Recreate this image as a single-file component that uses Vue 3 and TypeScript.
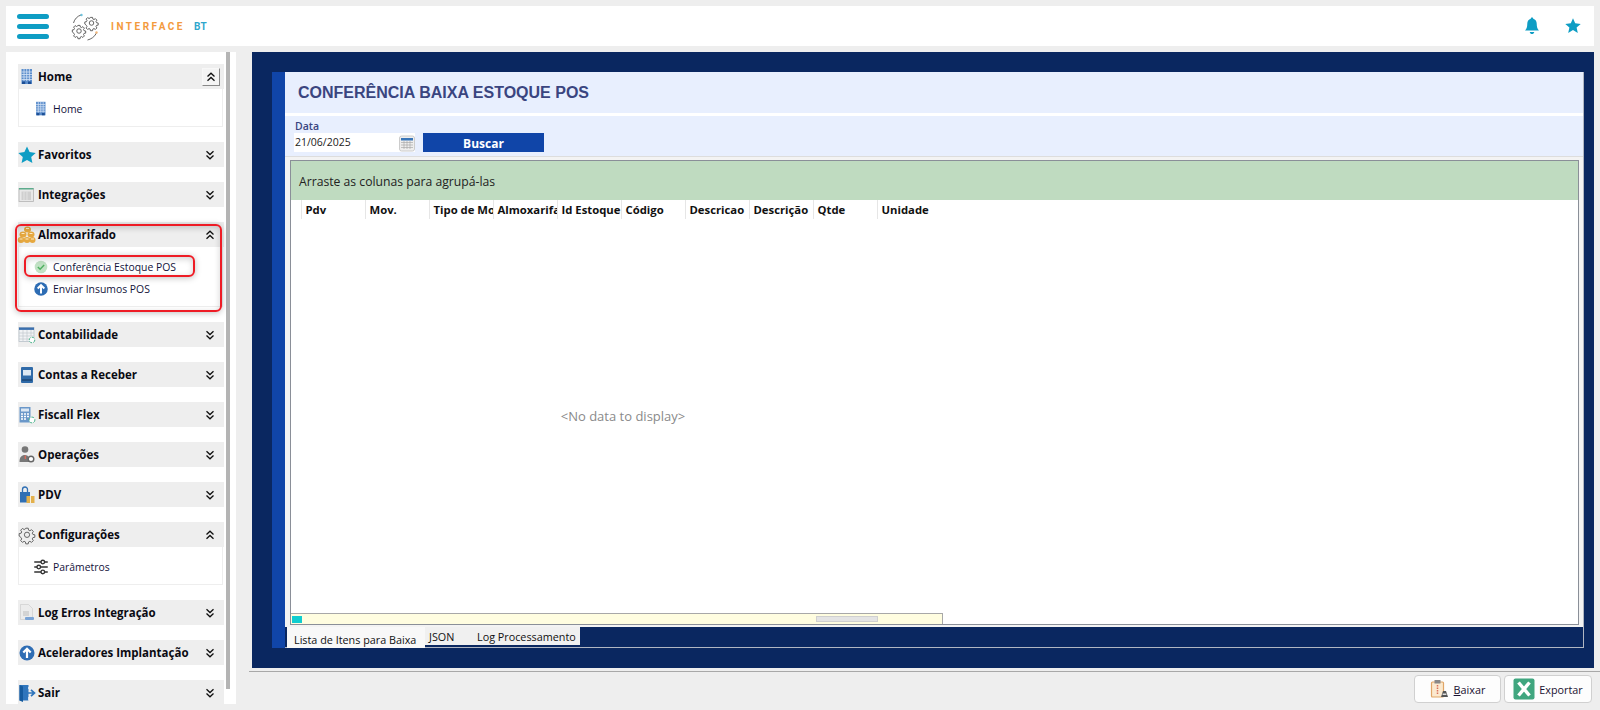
<script setup lang="ts">
interface Item { label: string; icon: string; mark?: boolean }
interface Section { title: string; icon: string; open?: boolean; button?: boolean; mark?: boolean; items?: Item[] }

const building = '<rect x="4.500" y="2" width="10.500" height="15" fill="#5b8dcb"/><path d="M4.500 5h10.500M4.500 7.500h10.500M4.500 10h10.500M4.500 12.500h10.500M7 2v12M9.700 2v12M12.400 2v12" stroke="#d5e3f5" stroke-width=".8"/><rect x="5" y="14.500" width="3.200" height="2.500" fill="#1d4f96"/><rect x="11" y="14.500" width="3.200" height="2.500" fill="#1d4f96"/>'
const gearPath = 'M8.600 2.500h2.800l.4 2.200 1.500.7 1.900-1.200 2 2-1.200 1.900.7 1.500 2.200.4v2.800l-2.200.4-.7 1.500 1.200 1.900-2 2-1.900-1.200-1.500.7-.4 2.200H8.600l-.4-2.200-1.500-.7-1.900 1.200-2-2 1.200-1.900-.7-1.500L1.100 11.400V8.600l2.200-.4.7-1.500-1.200-1.900 2-2 1.900 1.200 1.500-.7z'
const gear = `<g fill="none" stroke="#555" stroke-width="1" transform="translate(1.200 1) scale(.88)"><circle cx="10" cy="10" r="3"/><path d="${gearPath}"/></g>`
const upArrow = '<circle cx="10" cy="10" r="7.500" fill="#2e6db4"/><path d="M10 15V6M6.300 9.500 10 5.800l3.700 3.700" fill="none" stroke="#fff" stroke-width="2.200"/>'

const icons: Record<string, string> = {
  building,
  star: '<path d="M10 1.500l2.600 5.600 6.100.8-4.500 4.200 1.200 6L10 15.100l-5.400 3 1.200-6L1.300 7.900l6.100-.8z" fill="#0e9dc4"/>',
  table: '<rect x="2" y="3.500" width="14.500" height="13" fill="#e8e8e8" stroke="#b4b4b4" stroke-width=".8"/><rect x="2" y="3" width="14.500" height="1.500" fill="#5cab8c"/><rect x="4.500" y="6.500" width="9.500" height="8.500" fill="#cfcfcf"/><path d="M7 6.500v8.500M10 6.500v8.500" stroke="#e2e2e2"/>',
  coins: '<g fill="#e6a83f"><ellipse cx="10.500" cy="4.500" rx="3.500" ry="3"/><ellipse cx="6" cy="9.500" rx="3.500" ry="3"/><ellipse cx="14" cy="9.500" rx="3.500" ry="3"/><ellipse cx="4" cy="15" rx="3.300" ry="3"/><ellipse cx="10" cy="15" rx="3.300" ry="3"/><ellipse cx="15.500" cy="15" rx="3" ry="3"/></g><path d="M9 3.500h3M4.500 8.500h3M12.500 8.500h3M2.500 14h3M8.500 14h3M14 14h3" stroke="#fff2d2" stroke-width=".9"/>',
  calcGreen: '<rect x="2" y="2.500" width="15" height="14" fill="#f1f3f5" stroke="#b0bac4" stroke-width=".7"/><rect x="2" y="2.500" width="15" height="2.400" fill="#3a6fae"/><path d="M2 8h15M2 11h15M2 14h10M6 5v11M10 5v11M14 5v6" stroke="#c2c8ce" stroke-width=".7"/><circle cx="15" cy="15" r="2.800" fill="#fff" stroke="#49b38a" stroke-width="1" stroke-dasharray="3 1.200"/>',
  book: '<rect x="4" y="2" width="12" height="16" rx="1" fill="#2f6aa8"/><rect x="6" y="5" width="8" height="5.500" fill="#dbe7f3"/><rect x="5" y="14" width="10" height="2" fill="#204f82"/>',
  calc: '<rect x="2.500" y="2" width="11" height="15.500" fill="#6a97c9"/><rect x="4" y="3.500" width="8" height="3" fill="#dbe7f3"/><path d="M4 9h2M7 9h2M10 9h2M4 11.500h2M7 11.500h2M10 11.500h2M4 14h2M7 14h2" stroke="#fff" stroke-width="1.300"/><circle cx="15" cy="15" r="2.900" fill="#fff" stroke="#49b38a" stroke-width="1" stroke-dasharray="3 1.200"/>',
  person: '<circle cx="8" cy="4.500" r="3.300" fill="#777"/><path d="M2.500 17c0-5 2-7 5.500-7 2 0 3.500 1 4 3v4z" fill="#777"/><circle cx="14" cy="14" r="2.800" fill="#fff" stroke="#666" stroke-width="1.400"/><rect x="7.600" y="10.500" width="1.400" height="3.500" fill="#d86a5a"/>',
  bag: '<path d="M3 7h10v10.500H3z" fill="#2f6fb4"/><path d="M5.500 7V4.500a2.500 2.500 0 0 1 5 0V7" fill="none" stroke="#2f6fb4" stroke-width="1.300"/><rect x="9.500" y="11" width="8" height="7" fill="#e3b04b"/><path d="M13.500 11v7" stroke="#fff" stroke-width=".8"/>',
  gear,
  doc: '<path d="M3.500 1.500h8l4 4v11h-12z" fill="#ececec" stroke="#cdcdcd" stroke-width=".7"/><path d="M6 8h6v5H6z" fill="#d4d4d4"/><rect x="8" y="14" width="9" height="3" rx="1" fill="#7ba4d6"/>',
  exit: '<path d="M2.500 2h9v15.500h-9z" fill="#2f75bc"/><path d="M6 3.500 2.500 2v15.500L6 19z" fill="#155a9e"/><path d="M8 10h9M14 6.800 17.500 10 14 13.200" fill="none" stroke="#2f75bc" stroke-width="1.700"/><path d="M11.500 4v2M11.500 14v3.500" stroke="#cfe0f4"/>',
  check: '<circle cx="10" cy="10" r="7" fill="#c2e2c5"/><path d="M6.500 10l2.500 2.500 4.500-4.700" fill="none" stroke="#4fb060" stroke-width="1.600"/>',
  up: upArrow,
  sliders: '<path d="M2.500 4.500h15M2.500 10h15M2.500 15.500h15" stroke="#333" stroke-width="1.600"/><circle cx="12" cy="4.500" r="2" fill="#fff" stroke="#333" stroke-width="1.500"/><circle cx="7.500" cy="10" r="2" fill="#fff" stroke="#333" stroke-width="1.500"/><circle cx="12" cy="15.500" r="2" fill="#fff" stroke="#333" stroke-width="1.500"/>',
}

const sections: Section[] = [
  { title: 'Home', icon: 'building', open: true, button: true, items: [{ label: 'Home', icon: 'building' }] },
  { title: 'Favoritos', icon: 'star' },
  { title: 'Integrações', icon: 'table' },
  {
    title: 'Almoxarifado', icon: 'coins', open: true, mark: true,
    items: [
      { label: 'Conferência Estoque POS', icon: 'check', mark: true },
      { label: 'Enviar Insumos POS', icon: 'up' },
    ],
  },
  { title: 'Contabilidade', icon: 'calcGreen' },
  { title: 'Contas a Receber', icon: 'book' },
  { title: 'Fiscall Flex', icon: 'calc' },
  { title: 'Operações', icon: 'person' },
  { title: 'PDV', icon: 'bag' },
  { title: 'Configurações', icon: 'gear', open: true, items: [{ label: 'Parâmetros', icon: 'sliders' }] },
  { title: 'Log Erros Integração', icon: 'doc' },
  { title: 'Aceleradores Implantação', icon: 'up' },
  { title: 'Sair', icon: 'exit' },
]

const columns = ['Pdv', 'Mov.', 'Tipo de Mov', 'Almoxarifado', 'Id Estoque', 'Código', 'Descricao', 'Descrição', 'Qtde', 'Unidade']
</script>

<template>
  <div class="page">
    <header class="topbar">
      <button class="burger" type="button" aria-label="Menu"><i></i><i></i><i></i></button>
      <svg class="logo" viewBox="0 0 28 30" width="28" height="30">
        <g fill="none" stroke="#555" stroke-width="1.200">
          <g transform="translate(13 4.500) scale(.75)"><circle cx="10" cy="10" r="3"/><path d="M8.600 2.500h2.800l.4 2.200 1.500.7 1.900-1.200 2 2-1.200 1.900.7 1.500 2.200.4v2.800l-2.200.4-.7 1.500 1.200 1.900-2 2-1.900-1.200-1.500.7-.4 2.200H8.600l-.4-2.200-1.500-.7-1.900 1.200-2-2 1.200-1.900-.7-1.500L1.100 11.400V8.600l2.200-.4.7-1.500-1.200-1.900 2-2 1.900 1.200 1.500-.7z"/></g>
          <g transform="translate(.5 12.500) scale(.75)"><circle cx="10" cy="10" r="3"/><path d="M8.600 2.500h2.800l.4 2.200 1.500.7 1.900-1.200 2 2-1.200 1.900.7 1.500 2.200.4v2.800l-2.200.4-.7 1.500 1.200 1.900-2 2-1.900-1.200-1.500.7-.4 2.200H8.600l-.4-2.200-1.500-.7-1.900 1.200-2-2 1.200-1.900-.7-1.500L1.100 11.400V8.600l2.200-.4.7-1.500-1.200-1.900 2-2 1.900 1.200 1.500-.7z"/></g>
          <path d="M2.500 12C3.500 8 6.500 5 10 4M16.500 29c3.500-.8 7-3 9-7" stroke-width=".9"/>
        </g>
        <circle cx="10.500" cy="4" r="1.200" fill="#6fc3dd"/>
        <circle cx="25.500" cy="21.500" r="1.200" fill="#f2b679"/>
      </svg>
      <span class="brand">INTERFACE</span>
      <span class="brand-bt">BT</span>
      <span class="spacer"></span>
      <svg class="top-icon" viewBox="0 0 16 16" width="18" height="18">
        <path d="M8 .5c.7 0 1.100.5 1.100 1.100 2 .6 3.100 2.200 3.100 4.400 0 3 .6 4.600 2 6H1.800c1.400-1.400 2-3 2-6 0-2.200 1.100-3.800 3.100-4.400C6.900 1 7.300.500 8 .500z" fill="#0e9dc4"/>
        <path d="M6 13.300h4c-.2 1.300-1 1.900-2 1.900s-1.800-.6-2-1.900z" fill="#0e9dc4"/>
      </svg>
      <svg class="top-icon star-top" viewBox="0 0 16 16" width="16" height="16">
        <path d="M8 .3l2.200 5 5.500.6-4.100 3.600 1.200 5.400L8 12.100l-4.800 2.800 1.200-5.400L.3 5.900l5.500-.6z" fill="#0e9dc4"/>
      </svg>
    </header>

    <div class="content">
      <aside class="sidebar">
        <section v-for="s in sections" :key="s.title" class="section">
          <div v-if="s.mark" class="red-mark"></div>
          <div class="sec-head">
            <svg class="sec-icon" viewBox="0 0 20 20" width="20" height="20" v-html="icons[s.icon]"></svg>
            <span class="sec-title">{{ s.title }}</span>
            <span class="chev" :class="{ boxed: s.button }">
              <svg viewBox="0 0 10 10" width="10" height="10">
                <path v-if="s.open" d="M1.500 4.500 5 1.200 8.500 4.500M1.500 8.800 5 5.500 8.500 8.800" fill="none" stroke="#111" stroke-width="1.300"/>
                <path v-else d="M1.500 1.200 5 4.500 8.500 1.200M1.500 5.500 5 8.800 8.500 5.500" fill="none" stroke="#111" stroke-width="1.300"/>
              </svg>
            </span>
          </div>
          <div v-if="s.items" class="sec-body">
            <div v-for="it in s.items" :key="it.label" class="item">
              <div v-if="it.mark" class="red-mark inner"></div>
              <svg class="item-icon" viewBox="0 0 20 20" width="18" height="18" v-html="icons[it.icon]"></svg>
              <span>{{ it.label }}</span>
            </div>
          </div>
        </section>
        <div class="side-scroll"></div>
      </aside>

      <div class="main-col">
        <main class="panel">
          <div class="inner">
            <div class="strip"></div>
            <div class="form">
              <div class="title-band"><h1>CONFERÊNCIA BAIXA ESTOQUE POS</h1></div>
              <div class="toolbar">
                <div class="field">
                  <label>Data</label>
                  <div class="date-input">
                    <span class="date-text">21/06/2025</span>
                    <svg viewBox="0 0 16 16" width="16" height="18">
                      <rect x=".5" y="1" width="15" height="15" rx="2" fill="#eee" stroke="#ccc"/>
                      <rect x="2" y="3" width="12" height="2.500" fill="#3a76b8"/>
                      <path d="M2 7.500h12M2 10h12M2 12.500h12M5 6v8M8 6v8M11 6v8" stroke="#aaa" stroke-width=".7"/>
                    </svg>
                  </div>
                </div>
                <button class="search" type="button">Buscar</button>
              </div>
              <div class="tab-pane">
                <div class="grid">
                  <div class="group-band">Arraste as colunas para agrupá-las</div>
                  <div class="grid-body">
                    <div class="table-area">
                      <div class="col-head">
                        <div class="indicator"></div>
                        <div v-for="c in columns" :key="c" class="col">{{ c }}</div>
                      </div>
                      <div class="no-data">&lt;No data to display&gt;</div>
                      <div class="h-scroll">
                        <div class="h-corner"></div>
                        <div class="h-thumb"></div>
                      </div>
                    </div>
                  </div>
                </div>
              </div>
              <div class="tabs">
                <span class="tab active">Lista de Itens para Baixa</span>
                <span class="tab json">JSON</span>
                <span class="tab log">Log Processamento</span>
              </div>
            </div>
          </div>
        </main>
        <footer class="footer">
          <button class="action baixar" type="button">
            <svg viewBox="0 0 20 20" width="20" height="20">
              <rect x="1.500" y="3" width="12" height="15" rx="1" fill="#fbe9cf" stroke="#e0a566" stroke-width="1.200"/>
              <rect x="4.500" y="1" width="6" height="3.500" fill="#888"/>
              <path d="M7.500 6v9" stroke="#d9705a" stroke-width="1.500" stroke-dasharray="1.500 1"/>
              <path d="M11 18l2-6h3l2 6z" fill="#555"/>
              <rect x="12.600" y="14.500" width="3.800" height="1.500" fill="#ddd"/>
            </svg>
            <span><u>B</u>aixar</span>
          </button>
          <button class="action exportar" type="button">
            <svg viewBox="0 0 22 22" width="22" height="22">
              <rect x=".5" y=".5" width="21" height="21" rx="2" fill="#40a67f"/>
              <path d="M5.500 4.500 16.500 17.500M16.500 4.500 5.500 17.500" stroke="#fff" stroke-width="3.400"/>
            </svg>
            <span>Exportar</span>
          </button>
        </footer>
      </div>
    </div>
  </div>
</template>

<style>
html, body { margin: 0; background: #eeeeee; overflow: hidden; }
</style>

<style scoped>
* { box-sizing: border-box; }
.page {
  width: 1600px; height: 710px; padding: 6px 6px 0; background: #eeeeee; overflow: hidden;
  display: flex; flex-direction: column; gap: 6px;
  font-family: "Open Sans", sans-serif; color: #111;
}
.topbar { height: 40px; flex: none; background: #fff; display: flex; align-items: center; padding-left: 11px; }
.burger { width: 32px; height: 25px; padding: 0; border: 0; background: none; display: flex; flex-direction: column; justify-content: space-between; }
.burger i { display: block; height: 5px; border-radius: 3px; background: #0e9dc4; }
.logo { margin-left: 22px; flex: none; }
.brand { margin-left: 12px; font: bold 10px Roboto, sans-serif; letter-spacing: 2.500px; color: #f39a3e; }
.brand-bt { margin-left: 9px; font: bold 10px Roboto, sans-serif; letter-spacing: .3px; color: #2fa6cc; }
.spacer { flex: 1; }
.top-icon { flex: none; margin-right: 24px; }
.star-top { margin-right: 13px; }

.content { flex: 1; min-height: 0; display: flex; gap: 16px; }
.sidebar {
  width: 230px; height: 652px; flex: none; background: #fff; position: relative; overflow: hidden;
  padding: 12px 12px 0; display: flex; flex-direction: column; gap: 15px;
}
.section { position: relative; width: 206px; flex: none; }
.sec-head { height: 25px; background: #eeeeee; display: flex; align-items: center; }
.sec-icon { flex: none; margin-left: -1.500px; }
.sec-title { margin-left: 1.500px; flex: 1; font-weight: 700; font-size: 11.500px; color: #0a0a12; white-space: nowrap; }
.chev { width: 18px; height: 18px; margin-right: 5px; display: flex; align-items: center; justify-content: center; }
.chev.boxed { margin-right: 4px; background: #f4f4f4; border: 1px solid; border-color: #f8f8f8 #888 #888 #f8f8f8; }
.sec-body { border: 1px solid #eeeeee; border-top: 0; padding: 9px 0 6px; position: relative; width: 205px; }
.item { position: relative; height: 22px; display: flex; align-items: center; font-size: 10.400px; color: #12123a; }
.item-icon { flex: none; margin-left: 13px; margin-right: 3px; }
.item span { white-space: nowrap; position: relative; }
.red-mark {
  position: absolute; left: -3px; top: 2px; width: 207px; height: 88px; border: 2px solid #ee1c25; border-radius: 6px;
  box-shadow: 0 1px 6px rgba(0,0,0,.25), inset 0 2px 6px rgba(0,0,0,.18); z-index: 1; pointer-events: none;
}
.red-mark.inner { left: 5px; top: -1px; width: 171px; height: 22px; border-radius: 6px; }
.side-scroll { position: absolute; left: 220px; top: 0; width: 4px; height: 637px; background: #b4b4b4; }

.main-col { flex: 1; min-width: 0; display: flex; flex-direction: column; }
.panel { width: 1342px; height: 616px; flex: none; background: #0a2760; padding: 20px 10px 20px 20px; }
.inner { height: 576px; display: flex; }
.strip { width: 13px; flex: none; background: #1045a8; }
.form { flex: 1; min-width: 0; display: flex; flex-direction: column; background: #fff; border-right: 1px solid #b0b6c2; border-bottom: 1px solid #b0b6c2; }
.title-band { height: 41px; flex: none; background: #e8effe; display: flex; align-items: center; padding-left: 13px; }
h1 { margin: 0; font: bold 16px "Liberation Sans", sans-serif; color: #3a4580; }
.toolbar { height: 40px; flex: none; margin-top: 3px; background: #e8effe; display: flex; align-items: flex-end; padding: 0 0 4px 9px; gap: 8px; }
.field { width: 121px; flex: none; }
.field label { display: block; font-size: 10.500px; font-weight: 600; line-height: 13px; padding-left: 1px; color: #3a4580; }
.date-input { height: 19px; background: #fff; display: flex; align-items: center; justify-content: space-between; padding-left: 1px; font-size: 10.500px; color: #222; }
.date-text { padding-bottom: 2px; }
.search { width: 121px; height: 19px; flex: none; padding: 1px 0 0; border: 0; background: #1045a8; color: #fff; font: 700 12px "Open Sans", sans-serif; }
.tab-pane { flex: 1; min-height: 0; background: #f3f3f3; border-top: 1px solid #ddd; padding: 3px 4px 2px 5px; }
.grid { height: 100%; border: 1.500px solid #8a8f98; background: #fff; display: flex; flex-direction: column; }
.group-band { height: 38.500px; flex: none; background: #bfdbc0; display: flex; align-items: center; padding: 2px 0 0 8px; font-size: 12.200px; color: #222; }
.grid-body { flex: 1; min-height: 0; display: flex; }
.table-area { width: 652px; display: flex; flex-direction: column; }
.col-head { height: 19px; flex: none; display: flex; }
.indicator { width: 11px; flex: none; border-right: 1px solid #e6e6e6; }
.col { width: 64px; flex: none; overflow: hidden; white-space: nowrap; padding-left: 3.500px; border-right: 1px solid #e6e6e6; font-weight: 700; font-size: 11.300px; line-height: 19px; color: #111; }
.col:last-child { border-right: 0; }
.no-data { flex: 1; display: flex; align-items: center; justify-content: center; padding-left: 12px; font-size: 13px; color: #8a8a8a; }
.h-scroll { height: 11px; flex: none; position: relative; background: #fffde0; border: 1px solid #a8a8a8; border-width: 1.500px 1px 0 0; }
.h-corner { position: absolute; left: 1px; top: 2px; width: 10px; height: 7px; background: #10cdd0; }
.h-thumb { position: absolute; left: 525px; top: 2px; width: 62px; height: 6px; background: #e4e4e4; border: 1px solid #d0d0d0; }
.tabs { height: 20px; flex: none; background: #0a2760; display: flex; align-items: flex-start; font-size: 10.800px; padding-left: 2px; color: #111; }
.tab { height: 18px; display: flex; align-items: center; background: #f0f0f0; white-space: nowrap; flex: none; }
.tab.active { height: 21px; width: 138px; background: #f8f8f8; padding: 3px 0 0 7px; }
.tab.json { width: 45px; padding-left: 4px; }
.tab.log { width: 110px; padding-left: 7px; }

.footer { flex: 1; min-height: 0; margin: 3px -6px 0 -3px; border-top: 1px solid #a8a8a8; display: flex; justify-content: flex-end; padding: 3px 8px 0 0; gap: 3px; }
.action { height: 28px; display: flex; align-items: center; justify-content: center; gap: 4px; background: #fdfdfd; border: 1px solid #d0d0d0; border-radius: 4px; font: 400 10.800px "Open Sans", sans-serif; color: #1a1030; padding: 0; }
.baixar { width: 87px; }
.exportar { width: 88px; }
</style>
